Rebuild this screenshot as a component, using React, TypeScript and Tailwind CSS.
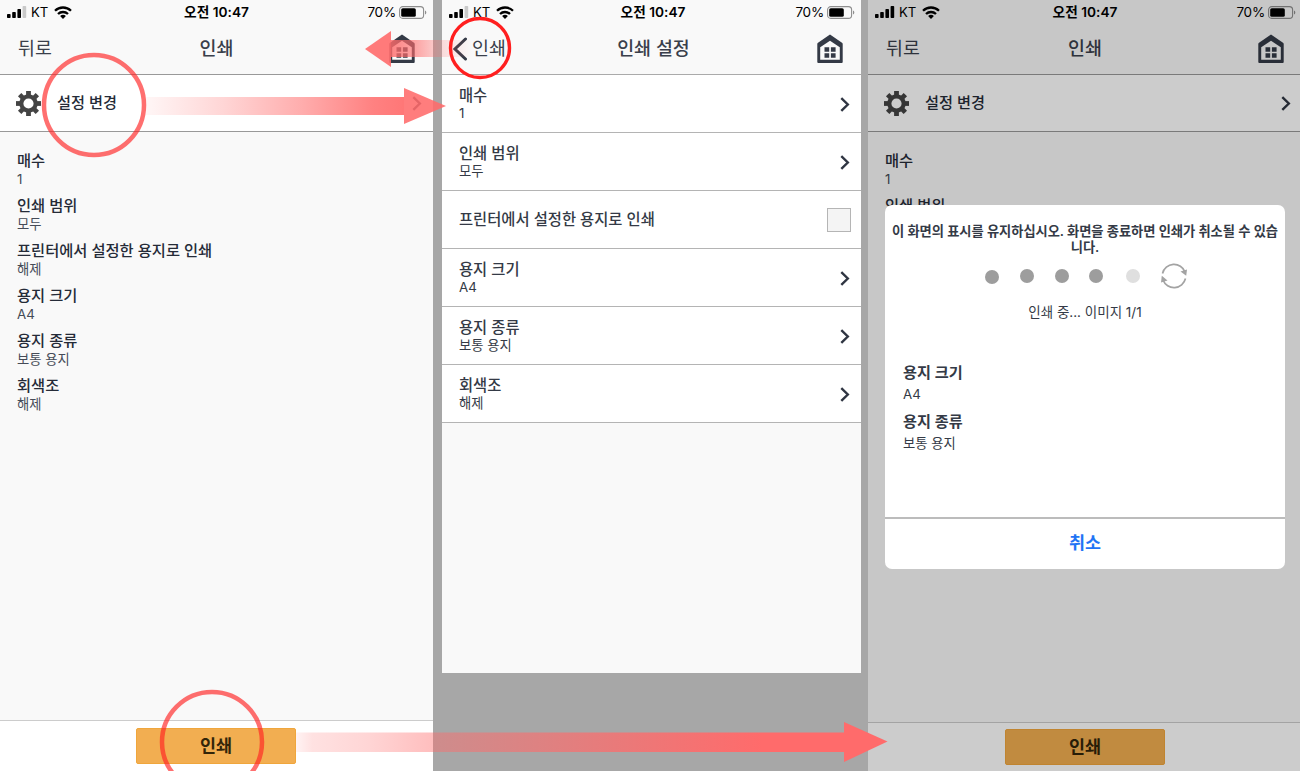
import type { ReactNode } from 'react'

interface Setting {
  title: string
  value?: string
}

const summary: Setting[] = [
  { title: '매수', value: '1' },
  { title: '인쇄 범위', value: '모두' },
  { title: '프린터에서 설정한 용지로 인쇄', value: '해제' },
  { title: '용지 크기', value: 'A4' },
  { title: '용지 종류', value: '보통 용지' },
  { title: '회색조', value: '해제' },
]

const options: Setting[] = [
  { title: '매수', value: '1' },
  { title: '인쇄 범위', value: '모두' },
  { title: '프린터에서 설정한 용지로 인쇄' },
  { title: '용지 크기', value: 'A4' },
  { title: '용지 종류', value: '보통 용지' },
  { title: '회색조', value: '해제' },
]

// The dialog covers everything below the second title
const behindDialog: Setting[] = [{ title: '매수', value: '1' }, { title: '인쇄 범위' }]

const dots = [
  { color: 'bg-[#9d9d9d]', margin: 'mt-[2px]' },
  { color: 'bg-[#9d9d9d]', margin: 'ml-[21px]' },
  { color: 'bg-[#9d9d9d]', margin: 'ml-[21px]' },
  { color: 'bg-[#9d9d9d]', margin: 'ml-[20px]' },
  { color: 'bg-[#dfdfdf]', margin: 'ml-[23px]' },
]

function StatusBar({
  fullSignal = false,
  clockClass = '',
  batteryClass = 'mr-[6px]',
}: {
  fullSignal?: boolean
  clockClass?: string
  batteryClass?: string
}) {
  return (
    <div className="relative flex h-6 items-center pl-[7px] text-[13.5px] text-black">
      <svg className="h-[12px] w-[20px]" viewBox="0 0 20 12">
        <rect x="0" y="8" width="3.6" height="4" rx="0.8" />
        <rect x="5.2" y="6" width="3.6" height="6" rx="0.8" />
        <rect x="10.4" y="3" width="3.6" height="9" rx="0.8" />
        <rect x="15.6" y="0" width="3.6" height="12" rx="0.8" fill={fullSignal ? '#000' : '#c9c9c9'} />
      </svg>
      <span className="ml-[4px] pt-px text-[13.2px]">KT</span>
      <svg className="ml-[6px] h-[13px] w-[18px]" viewBox="0 0 18 13" fill="none" stroke="#000" strokeWidth="2.3">
        <path d="M1 4.8a11.4 11.4 0 0 1 16 0" />
        <path d="M4 8a7.2 7.2 0 0 1 10 0" />
        <path d="M6.1 10.1a4.2 4.2 0 0 1 5.8 0L9 13z" fill="#000" stroke="none" />
      </svg>
      <span className={`absolute inset-x-0 text-center text-[13.7px] font-semibold ${clockClass}`}>오전 10:47</span>
      <div className={`ml-auto flex items-center ${batteryClass}`}>
        <span className="tracking-[-0.2px]">70%</span>
        <svg className="ml-[3px] h-[13px] w-[28px]" viewBox="0 0 28 13">
          <rect x="0.6" y="0.6" width="24" height="11.8" rx="3.2" fill="none" stroke="#8e8e8e" strokeWidth="1.1" />
          <rect x="2.2" y="2.2" width="14.6" height="8.6" rx="1.6" />
          <path d="M26 4.5c1.8.6 1.8 3.4 0 4z" fill="#8e8e8e" />
        </svg>
      </div>
    </div>
  )
}

function HomeIcon() {
  return (
    <svg className="h-[30px] w-[26px]" viewBox="0 0 26 30" fill="#343a46">
      <path
        fillRule="evenodd"
        d="M13 .4 25 8.8q.7.5.7 1.3V28q0 1-1 1H1.3q-1 0-1-1V10.1q0-.8.7-1.3ZM13 6.8 3.2 13.2v12.5h19.6V13.2Z"
      />
      <path d="M7.500 13.300h4.700v4.500H7.500zM13.900 13.300h4.700v4.500h-4.700zM7.500 19.200h4.700v4.500H7.500zM13.900 19.200h4.700v4.500h-4.700z" />
    </svg>
  )
}

function GearIcon() {
  return (
    <svg className="h-[25px] w-[25px]" viewBox="-12 -12 24 24" fill="none" stroke="#444">
      {[0, 45, 90, 135, 180, 225, 270, 315].map((angle) => (
        <path key={angle} d="M0-12v5" strokeWidth="4.6" transform={`rotate(${angle})`} />
      ))}
      <circle r="6.9" strokeWidth="4" />
    </svg>
  )
}

function Chevron() {
  return (
    <svg className="h-[15px] w-[10px] shrink-0" viewBox="0 0 10 15" fill="none" stroke="#2f3542" strokeWidth="2.4">
      <path d="m1.3 1.2 6.5 6.3-6.5 6.3" />
    </svg>
  )
}

function NavBar({
  title,
  titleClass = '',
  back,
  homeMargin,
}: {
  title: string
  titleClass?: string
  back: ReactNode
  homeMargin: string
}) {
  return (
    <div className="relative flex h-[50px] items-center text-[18.4px] text-[#3a3f4b]">
      {back}
      <span className={`absolute inset-x-0 text-center font-medium ${titleClass}`}>{title}</span>
      <div className={`ml-auto ${homeMargin}`}>
        <HomeIcon />
      </div>
    </div>
  )
}

function PrintScreen({ items, dimmed = false }: { items: Setting[]; dimmed?: boolean }) {
  return (
    <div className={`flex h-[771px] flex-col bg-[#f9f9f9] ${dimmed ? 'w-[432px]' : 'w-[433px]'}`}>
      <StatusBar
        fullSignal={dimmed}
        clockClass={dimmed ? 'pl-[2px]' : ''}
        batteryClass={dimmed ? 'mr-[4px]' : 'mr-[6px]'}
      />
      <NavBar
        title="인쇄"
        titleClass={dimmed ? 'pl-[2px]' : ''}
        back={<span className="ml-[18px]">뒤로</span>}
        homeMargin={dimmed ? 'mr-[16px]' : 'mr-[18px]'}
      />
      <div className="flex h-[58px] items-center border-y border-[#999] bg-white pl-4">
        <GearIcon />
        <span className="ml-[16px] text-[15.2px] font-medium text-[#252b38]">설정 변경</span>
        <div className={`ml-auto pt-px ${dimmed ? 'mr-[9px]' : 'mr-[11px]'}`}>
          <Chevron />
        </div>
      </div>
      <dl className="pl-[17px] pt-[18px]">
        {items.map((item) => (
          <div key={item.title} className="h-[45px]">
            <dt className="text-[15.3px] leading-[22px] font-medium text-[#252b38]">{item.title}</dt>
            {item.value && <dd className="text-[13.3px] leading-[14px] text-[#454b57]">{item.value}</dd>}
          </div>
        ))}
      </dl>
      <div
        className={`mt-auto flex justify-center border-t border-[#ccc] bg-white ${
          dimmed ? 'h-[49px] pt-[6px] pl-[2px]' : 'h-[51px] pt-[7px] pr-px'
        }`}
      >
        <button className="h-[36px] w-[160px] rounded-[2px] border border-[#f0a63c] bg-[#f2ae51] text-[17.4px] font-semibold text-[#332509]">
          인쇄
        </button>
      </div>
    </div>
  )
}

function SettingsScreen() {
  return (
    <div className="ml-[9px] h-[673px] w-[419px] bg-[#f9f9f9]">
      <StatusBar clockClass="pl-[3px]" />
      <NavBar
        title="인쇄 설정"
        titleClass="pl-[4px]"
        homeMargin="mr-[18px]"
        back={
          <span className="ml-[11px] flex items-center">
            <svg className="h-6 w-[15px]" viewBox="0 0 15 24" fill="none" stroke="#343a46" strokeWidth="3" strokeLinecap="round">
              <path d="M12.5 2 2 12l10.5 10" />
            </svg>
            <span className="ml-[4px]">인쇄</span>
          </span>
        }
      />
      <ul className="border-t border-[#aaa]">
        {options.map((item) => (
          <li
            key={item.title}
            className="flex h-[58px] items-center justify-between border-b border-[#b4b4b4] bg-white pr-[11px] pl-[17px]"
          >
            <div className="text-[#343a46]">
              <div className="text-[15.35px] leading-[20px] font-medium">{item.title}</div>
              {item.value && <div className="text-[13.3px] leading-[15px]">{item.value}</div>}
            </div>
            {item.value ? (
              <div className="pt-px">
                <Chevron />
              </div>
            ) : (
              <span className="-mr-px size-6 border border-[#b5b5b5] bg-[#f4f4f4]" />
            )}
          </li>
        ))}
      </ul>
    </div>
  )
}

function ProgressDialog() {
  return (
    <div className="absolute top-[205px] left-[17px] flex h-[364px] w-[400px] flex-col rounded-[7px] bg-white text-[#343a46]">
      <p className="mt-[18px] text-center text-[13.25px] leading-[16px] font-semibold tracking-[-0.04px]">
        이 화면의 표시를 유지하십시오. 화면을 종료하면 인쇄가 취소될 수 있습
        <br />
        니다.
      </p>
      <div className="mt-[7px] ml-[100px] flex h-7 items-center">
        {dots.map((dot, i) => (
          <span key={i} className={`size-[14px] rounded-full ${dot.color} ${dot.margin}`} />
        ))}
        <svg className="ml-[20px] size-7" viewBox="0 0 28 28" fill="none" stroke="#a3a3a3" strokeWidth="1.7">
          <path d="M2.5 11.5A11.8 11.8 0 0 1 25 10" />
          <path d="M25.5 16.5A11.8 11.8 0 0 1 3 18" />
          <path d="m20.5 9.500 6.500-2-.8 6.200z" fill="#a3a3a3" stroke="none" />
          <path d="m7.500 18.500-6.500 2 .8-6.700z" fill="#a3a3a3" stroke="none" />
        </svg>
      </div>
      <p className="mt-[11px] text-center text-[13.5px] leading-[22px]">인쇄 중... 이미지 1/1</p>
      <dl className="mt-[38px] ml-[18px]">
        {summary.slice(3, 5).map((item) => (
          <div key={item.title} className="h-[49px]">
            <dt className="text-[15.2px] leading-[24px] font-semibold">{item.title}</dt>
            <dd className="text-[13.3px] leading-[18px]">{item.value}</dd>
          </div>
        ))}
      </dl>
      <button className="mt-auto h-[52px] border-t-2 border-[#bcbcbc] pb-[2px] text-[17.4px] font-semibold text-[#1f74f5]">
        취소
      </button>
    </div>
  )
}

// Circles and arrows that lead from one screen to the next
function Annotations() {
  return (
    <svg className="pointer-events-none absolute inset-0 h-[771px] w-[1300px]" viewBox="0 0 1300 771" fill="none">
      <defs>
        <linearGradient id="to-settings" gradientUnits="userSpaceOnUse" x1="146" x2="404" y1="0" y2="0">
          <stop offset="0" stopColor="#ff6b6b" stopOpacity="0.06" />
          <stop offset="0.3" stopColor="#ff6b6b" stopOpacity="0.28" />
          <stop offset="0.6" stopColor="#ff6b6b" stopOpacity="0.55" />
          <stop offset="0.88" stopColor="#ff6b6b" stopOpacity="0.85" />
          <stop offset="1" stopColor="#ff6b6b" stopOpacity="0.92" />
        </linearGradient>
        <linearGradient id="to-print" gradientUnits="userSpaceOnUse" x1="391" x2="472" y1="0" y2="0">
          <stop offset="0" stopColor="#ff6b6b" stopOpacity="0.82" />
          <stop offset="0.3" stopColor="#ff6b6b" stopOpacity="0.6" />
          <stop offset="0.65" stopColor="#ff6b6b" stopOpacity="0.2" />
          <stop offset="1" stopColor="#ff6b6b" stopOpacity="0" />
        </linearGradient>
        <linearGradient id="to-progress" gradientUnits="userSpaceOnUse" x1="296" x2="844" y1="0" y2="0">
          <stop offset="0" stopColor="#ff6b6b" stopOpacity="0.08" />
          <stop offset="0.03" stopColor="#ff6b6b" stopOpacity="0.2" />
          <stop offset="0.13" stopColor="#ff6b6b" stopOpacity="0.28" />
          <stop offset="0.25" stopColor="#ff6b6b" stopOpacity="0.44" />
          <stop offset="0.85" stopColor="#ff6b6b" stopOpacity="1" />
        </linearGradient>
      </defs>
      <path d="M146 97h258v18H146z" fill="url(#to-settings)" />
      <path d="M404 88v36l42-18z" fill="#ff6b6b" fillOpacity="0.88" />
      <path d="M391 40h81v17h-81z" fill="url(#to-print)" />
      <path d="M391 31v36l-26-18z" fill="#ff6b6b" fillOpacity="0.9" />
      <path d="M296 732.5h548V752H296z" fill="url(#to-progress)" />
      <path d="M844 722v40l43.5-20.5z" fill="#ff6b6b" />
      <g stroke="#ff2222" strokeWidth="4.5" strokeOpacity="0.65">
        <circle cx="94" cy="105" r="50" />
        <circle cx="212" cy="742" r="50" />
      </g>
      <circle cx="480" cy="48" r="29.5" stroke="#ff1f1f" strokeWidth="3.4" />
    </svg>
  )
}

function App() {
  return (
    <div className="relative flex h-[771px] w-[1300px] items-start overflow-hidden bg-[#a7a7a7] font-[Inter,'Noto_Sans_CJK_KR',sans-serif]">
      <PrintScreen items={summary} />
      <SettingsScreen />
      <div className="relative ml-[7px]">
        <PrintScreen items={behindDialog} dimmed />
        <div className="absolute inset-0 bg-black/20" />
        <ProgressDialog />
      </div>
      <Annotations />
    </div>
  )
}

export default App
